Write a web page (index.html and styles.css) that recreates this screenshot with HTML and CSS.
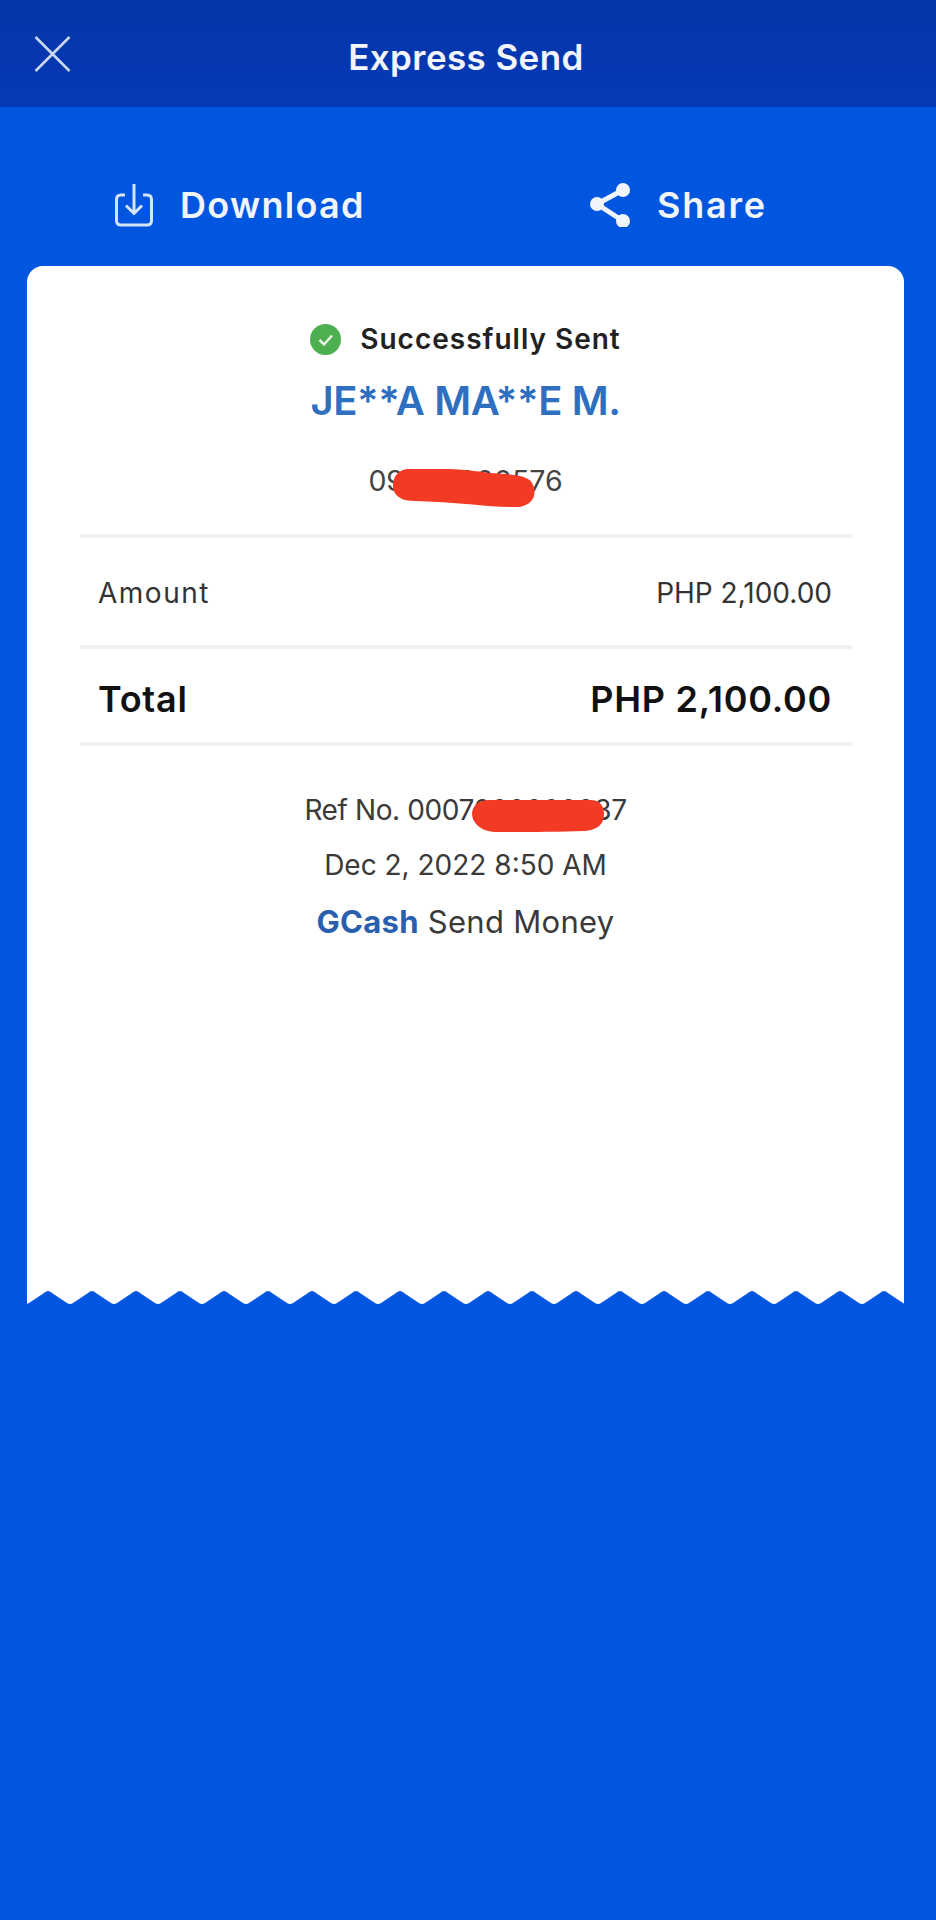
FILE: index.html
```html
<!DOCTYPE html>
<html lang="en">
<head>
    <meta charset="UTF-8">
    <title>Express Send</title>
    <link rel="stylesheet" href="styles.css">
</head>
<body>
<header class="top-bar">
    <svg class="top-bar__close" width="37" height="36" viewBox="0 0 37 36">
        <path d="M1.5 1 L35.500 35 M35.500 1 L1.500 35"/>
    </svg>
    <h1 class="top-bar__title">Express Send</h1>
</header>

<div class="actions">
    <a href="#" class="action action--download">
        <svg class="action__icon" width="38" height="44" viewBox="0 0 38 44">
            <path d="M10 12 H6 Q1.500 12 1.500 16.500 V37.500 Q1.500 42 6 42 H32 Q36.500 42 36.500 37.500 V16.500 Q36.500 12 32 12 H28"/>
            <path d="M19 1 V30 M11 22.500 L19 30.500 L27 22.500"/>
        </svg>
        Download
    </a>
    <a href="#" class="action action--share">
        <svg class="action__icon" width="40" height="44" viewBox="0 0 40 44">
            <path class="action__share-lines" d="M33 7 L7 21 L33 38"/>
            <circle cx="33" cy="7" r="7"/>
            <circle cx="7" cy="21" r="7"/>
            <circle cx="33" cy="38" r="7"/>
        </svg>
        Share
    </a>
</div>

<main class="receipt">
    <div class="receipt__body">
        <div class="receipt__status">
            <svg width="31" height="31" viewBox="0 0 31 31">
                <circle class="status-dot" cx="15.500" cy="15.500" r="15.500"/>
                <path class="status-check" d="M9.500 16 L14 20.500 L22 11.500"/>
            </svg>
            Successfully Sent
        </div>
        <div class="receipt__name">JE**A MA**E M.</div>
        <div class="receipt__phone">
            <span class="redacted">09000000576
                <svg class="redacted__mark redacted__mark--phone" width="144" height="39" viewBox="0 0 141 38" preserveAspectRatio="none">
                    <path d="M15 0 C50 -1 70 0 95 4 C115 5 130 6 136 12 C143 22 140 34 125 37 C100 38 70 33 40 32 L18 31 C5 30 0 22 1 14 C2 6 7 1 15 0 Z"/>
                </svg>
            </span>
        </div>

        <div class="receipt__rows">
            <div class="row row--amount">
                <span class="row__label">Amount</span>
                <span>PHP 2,100.00</span>
            </div>
            <div class="row row--total">
                <span>Total</span>
                <span>PHP 2,100.00</span>
            </div>
        </div>

        <div class="receipt__meta">
            <div class="receipt__ref">
                <span class="redacted">Ref No. 0007000000037
                    <svg class="redacted__mark redacted__mark--ref" width="132" height="32" viewBox="0 0 132 32">
                        <path d="M18 0 H118 C128 0 132 6 132 14 C132 24 126 30 112 31 C85 32 50 32 22 32 C8 31 0 22 0 14 C0 6 6 0 18 0 Z"/>
                    </svg>
                </span>
            </div>
            <div>Dec 2, 2022 8:50 AM</div>
            <div class="receipt__source"><b>GCash</b> Send Money</div>
        </div>
    </div>
    <svg class="receipt__edge" width="877" height="15" viewBox="0 0 877 15">
        <defs>
            <pattern id="edge-tooth" x="21" y="0" width="44" height="15" patternUnits="userSpaceOnUse">
                <path d="M0 0 H44 V1 Q42 1 40 3 L25 13 Q22 15 19 13 L4 3 Q2 1 0 1 Z"/>
            </pattern>
        </defs>
        <rect width="877" height="15" fill="url(#edge-tooth)"/>
    </svg>
</main>
</body>
</html>
```

FILE: styles.css
```css
* {
    box-sizing: border-box;
}

body {
    margin: 0;
    min-height: 1920px;
    background-color: #0156e0;
    font-family: "Inter", "Liberation Sans", sans-serif;
}

.top-bar {
    display: grid;
    grid-template-columns: 1fr auto 1fr;
    align-items: center;
    height: 107px;
    padding: 0 38px 0 34px;
    background: linear-gradient(#0435a8, #0539b6);
}

.top-bar__close path {
    fill: none;
    stroke: #cbd8f2;
    stroke-width: 2.500;
}

.top-bar__title {
    margin: 6px 0 0;
    color: #f2f5fc;
    font-size: 35px;
    font-weight: 600;
    letter-spacing: 0.400px;
    line-height: 40px;
}

.actions {
    display: flex;
    align-items: center;
    height: 159px;
    padding: 36px 0 0 115px;
}

.action {
    display: flex;
    align-items: center;
    color: #f0f4fd;
    font-size: 36px;
    font-weight: 600;
    letter-spacing: 1.300px;
    text-decoration: none;
}

.action--download {
    gap: 27px;
    width: 475px;
}

.action--share {
    gap: 27px;
    letter-spacing: 1.800px;
}

.action__icon {
    fill: #f0f4fd;
}

.action--download .action__icon path {
    fill: none;
    stroke: #d5e4fb;
    stroke-width: 3;
}

.action__share-lines {
    fill: none;
    stroke: #f0f4fd;
    stroke-width: 5;
}

.receipt {
    margin: 0 32px 0 27px;
}

.receipt__body {
    height: 1024px;
    padding-top: 53px;
    background-color: #fff;
    border-radius: 16px 16px 0 0;
    text-align: center;
}

.receipt__status {
    display: flex;
    align-items: center;
    justify-content: center;
    gap: 19px;
    color: #222;
    font-size: 28px;
    font-weight: 600;
    letter-spacing: 1px;
    line-height: 40px;
}

.status-dot {
    fill: #4caf50;
}

.status-check {
    fill: none;
    stroke: #e6f5e6;
    stroke-width: 2.500;
}

.receipt__name {
    margin-top: 18px;
    color: #2f6fc0;
    font-size: 40px;
    font-weight: 600;
    letter-spacing: -0.400px;
    line-height: 48px;
}

.receipt__phone {
    margin-top: 36px;
    color: #444;
    font-size: 28.500px;
    line-height: 40px;
}

.redacted {
    position: relative;
    display: inline-block;
}

.redacted__mark {
    position: absolute;
    fill: #f33a24;
}

.redacted__mark--phone {
    top: 8px;
    left: 24px;
}

.redacted__mark--ref {
    top: 10px;
    left: 168px;
}

.receipt__rows {
    margin: 33px 52px 0 53px;
    border-bottom: 4px solid #f1f1f1;
}

.row {
    display: flex;
    align-items: center;
    justify-content: space-between;
    padding: 0 20px 0 18px;
    border-top: 4px solid #f1f1f1;
}

.row--amount {
    height: 111px;
    padding-top: 2px;
    color: #333;
    font-size: 28px;
}

.row__label {
    letter-spacing: 1.500px;
}

.row--total {
    height: 97px;
    padding-top: 6px;
    color: #111;
    font-size: 36px;
    font-weight: 600;
    letter-spacing: 0.750px;
}

.receipt__meta {
    display: flex;
    flex-direction: column;
    gap: 15px;
    margin-top: 44px;
    color: #3a3a3a;
    font-size: 28px;
    line-height: 40px;
}

.receipt__ref {
    letter-spacing: -0.400px;
}

.receipt__source {
    margin-top: 2px;
    font-size: 31px;
    letter-spacing: 0.300px;
}

.receipt__source b {
    color: #2a5fae;
    font-weight: 700;
}

.receipt__edge {
    display: block;
    fill: #fff;
}
```
